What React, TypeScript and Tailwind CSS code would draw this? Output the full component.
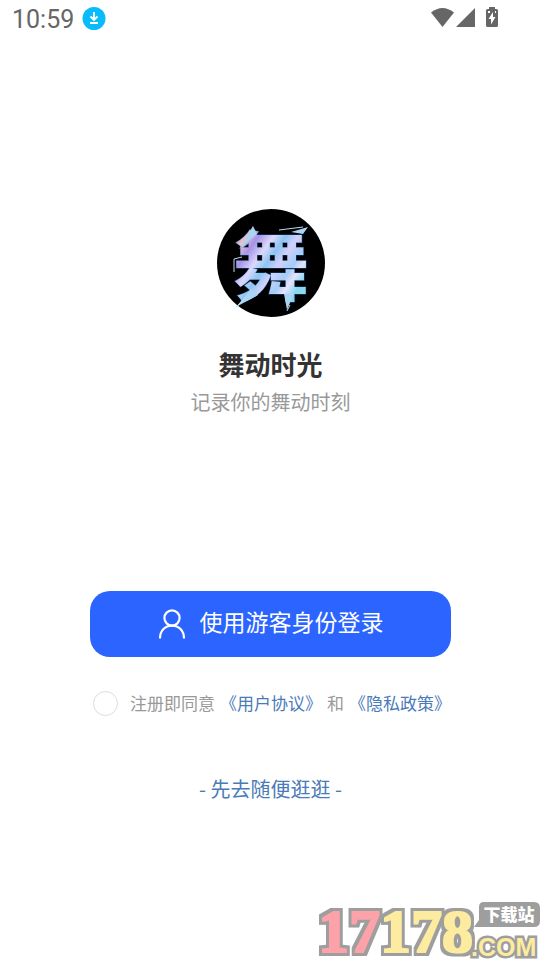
function StatusBar() {
  return (
    <header className="flex h-10 items-center justify-between pl-3 pr-10 pb-1 text-[#666666]">
      <div className="flex items-center gap-2">
        <span className="pt-1 font-['Roboto'] text-[25px] leading-8">10:59</span>
        <svg className="size-6" viewBox="0 0 24 24" aria-hidden="true">
          <circle cx="12" cy="12.500" r="11.5" fill="#08bcfb" />
          <path
            d="M12 6v8M8.5 10.500l3.5 3.500 3.5-3.500M8 17h8"
            fill="none"
            stroke="#fff"
            strokeWidth="1.9"
          />
        </svg>
      </div>
      <svg className="h-6 w-[70px]" viewBox="0 0 70 24" fill="#666666" aria-hidden="true">
        <path d="M1 6.500Q12.500 -2.500 24 6.500L12.500 21Z" />
        <path d="M45 2v19H26Z" />
        <path
          fillRule="evenodd"
          d="M59 1h6v2h1.500Q68 3 68 4.500v15Q68 21 66.500 21h-9Q56 21 56 19.500v-15Q56 3 57.500 3H59ZM63 6l-4.500 7H61v5.500l4.500-7.500H63ZM58 5v2h2V5ZM65 5v2h1V5Z"
        />
      </svg>
    </header>
  );
}

function AppLogo() {
  return (
    <svg className="size-[108px]" viewBox="0 0 108 108" role="img" aria-label="舞">
      <defs>
        <linearGradient id="holo" x1="0" y1="0" x2="1" y2="1">
          <stop offset="0" stopColor="#8fb4ee" />
          <stop offset=".14" stopColor="#9a86dc" />
          <stop offset=".22" stopColor="#f0c2c4" />
          <stop offset=".3" stopColor="#a592ea" />
          <stop offset=".4" stopColor="#dcd9fa" />
          <stop offset=".48" stopColor="#8cc4f2" />
          <stop offset=".56" stopColor="#d3d0fa" />
          <stop offset=".66" stopColor="#a3ccf6" />
          <stop offset=".72" stopColor="#e6e2fb" />
          <stop offset=".8" stopColor="#84d4ee" />
          <stop offset="1" stopColor="#b6e8f4" />
        </linearGradient>
      </defs>
      <circle cx="54" cy="54" r="54" fill="#000" />
      <text
        x="54"
        y="86"
        textAnchor="middle"
        className="font-['Noto_Sans_CJK_SC',sans-serif] text-[76px] font-bold"
        fill="url(#holo)"
        stroke="#164f86"
        strokeWidth="1"
        paintOrder="stroke"
      >
        舞
      </text>
      {/* sharp tips and sparks around the character */}
      <path d="M36 17l4 8-18 15 8-13ZM74 23l17-5-5 7ZM34 80l-15 18 22-12ZM77 84l-7 17-3-16Z" fill="#a9d4f4" />
      <path
        d="M17 63V50l8-2M62 21l24-3M28 90l-9 8M73 96l-3 6"
        fill="none"
        stroke="#b9dcf0"
        strokeWidth="1"
      />
    </svg>
  );
}

function UserIcon() {
  return (
    <svg
      className="h-[30px] w-7"
      viewBox="0 0 28 30"
      fill="none"
      stroke="#fff"
      strokeWidth="2.2"
      aria-hidden="true"
    >
      <circle cx="14" cy="9" r="7.600" />
      <path d="M2 29.500C2 21.500 7.200 16.600 14 16.600S26 21.500 26 29.500" />
    </svg>
  );
}

function SiteBadge() {
  return (
    <div className="pointer-events-none absolute bottom-0 right-0">
      <svg className="h-[62px] w-[224px]" viewBox="0 0 224 62" role="img" aria-label="17178.com 下载站">
        <defs>
          {/* thickens the lettering and puts a square-cornered border round it */}
          <filter id="block" x="-10%" y="-10%" width="120%" height="120%" colorInterpolationFilters="sRGB">
            <feMorphology in="SourceGraphic" operator="dilate" radius="1" result="fat" />
            <feMorphology in="SourceAlpha" operator="dilate" radius="4" result="edge" />
            <feFlood floodColor="#9e9e9e" />
            <feComposite in2="edge" operator="in" result="border" />
            <feMerge>
              <feMergeNode in="border" />
              <feMergeNode in="fat" />
            </feMerge>
          </filter>
        </defs>
        <text
          x="2"
          y="54"
          className="font-['Liberation_Serif',serif] text-[62px] font-bold"
          fill="#fda2a9"
          filter="url(#block)"
        >
          17<tspan fill="#fdec9f">178</tspan>
        </text>
        <text
          x="155"
          y="58"
          className="font-['Liberation_Sans',sans-serif] text-[25px] font-bold"
          fill="#fdec9f"
          stroke="#9e9e9e"
          strokeWidth="5"
          paintOrder="stroke"
        >
          .COM
        </text>
        <path d="M168 4h50q6 0 6 6v13q0 6-6 6h-60l5-7V9q0-5 5-5Z" fill="#9e9e9e" />
        <text
          x="193"
          y="23"
          textAnchor="middle"
          className="font-['Noto_Sans_CJK_SC',sans-serif] text-[17px] font-black"
          fill="#fff"
        >
          下载站
        </text>
      </svg>
    </div>
  );
}

export default function App() {
  return (
    <div className="relative flex min-h-screen flex-col overflow-hidden bg-white font-['Noto_Sans_CJK_SC',sans-serif]">
      <StatusBar />

      <main className="flex flex-col items-center pl-px pt-[169px]">
        <AppLogo />
        <h1 className="mt-7 text-[26px] font-bold leading-[38px] text-[#333333]">舞动时光</h1>
        <p className="text-[20px] leading-[38px] text-[#999999]">记录你的舞动时刻</p>

        <div className="mt-[170px] w-[67%]">
          <button
            type="button"
            className="flex h-[66px] w-full items-center justify-center gap-3.5 rounded-[20px] bg-[#2b64ff] text-[23px] text-white"
          >
            <UserIcon />
            <span className="pb-1.5">使用游客身份登录</span>
          </button>

          <div className="mt-8 flex items-center gap-3 whitespace-nowrap pl-[3px] text-[17px] leading-7 text-[#999999]">
            <input
              id="agree"
              type="checkbox"
              className="size-[25px] shrink-0 appearance-none rounded-full border border-[#dddddd] checked:bg-[#2b64ff]"
            />
            <div className="flex gap-[5px]">
              <label htmlFor="agree">注册即同意</label>
              <a href="#terms" className="text-[#4a7ab8]">
                《用户协议》
              </a>
              <span>和</span>
              <a href="#privacy" className="text-[#4a7ab8]">
                《隐私政策》
              </a>
            </div>
          </div>
        </div>

        <a href="#browse" className="mt-14 text-[20px] leading-8 text-[#4a7ab8]">
          - 先去随便逛逛 -
        </a>
      </main>

      <SiteBadge />
    </div>
  );
}
